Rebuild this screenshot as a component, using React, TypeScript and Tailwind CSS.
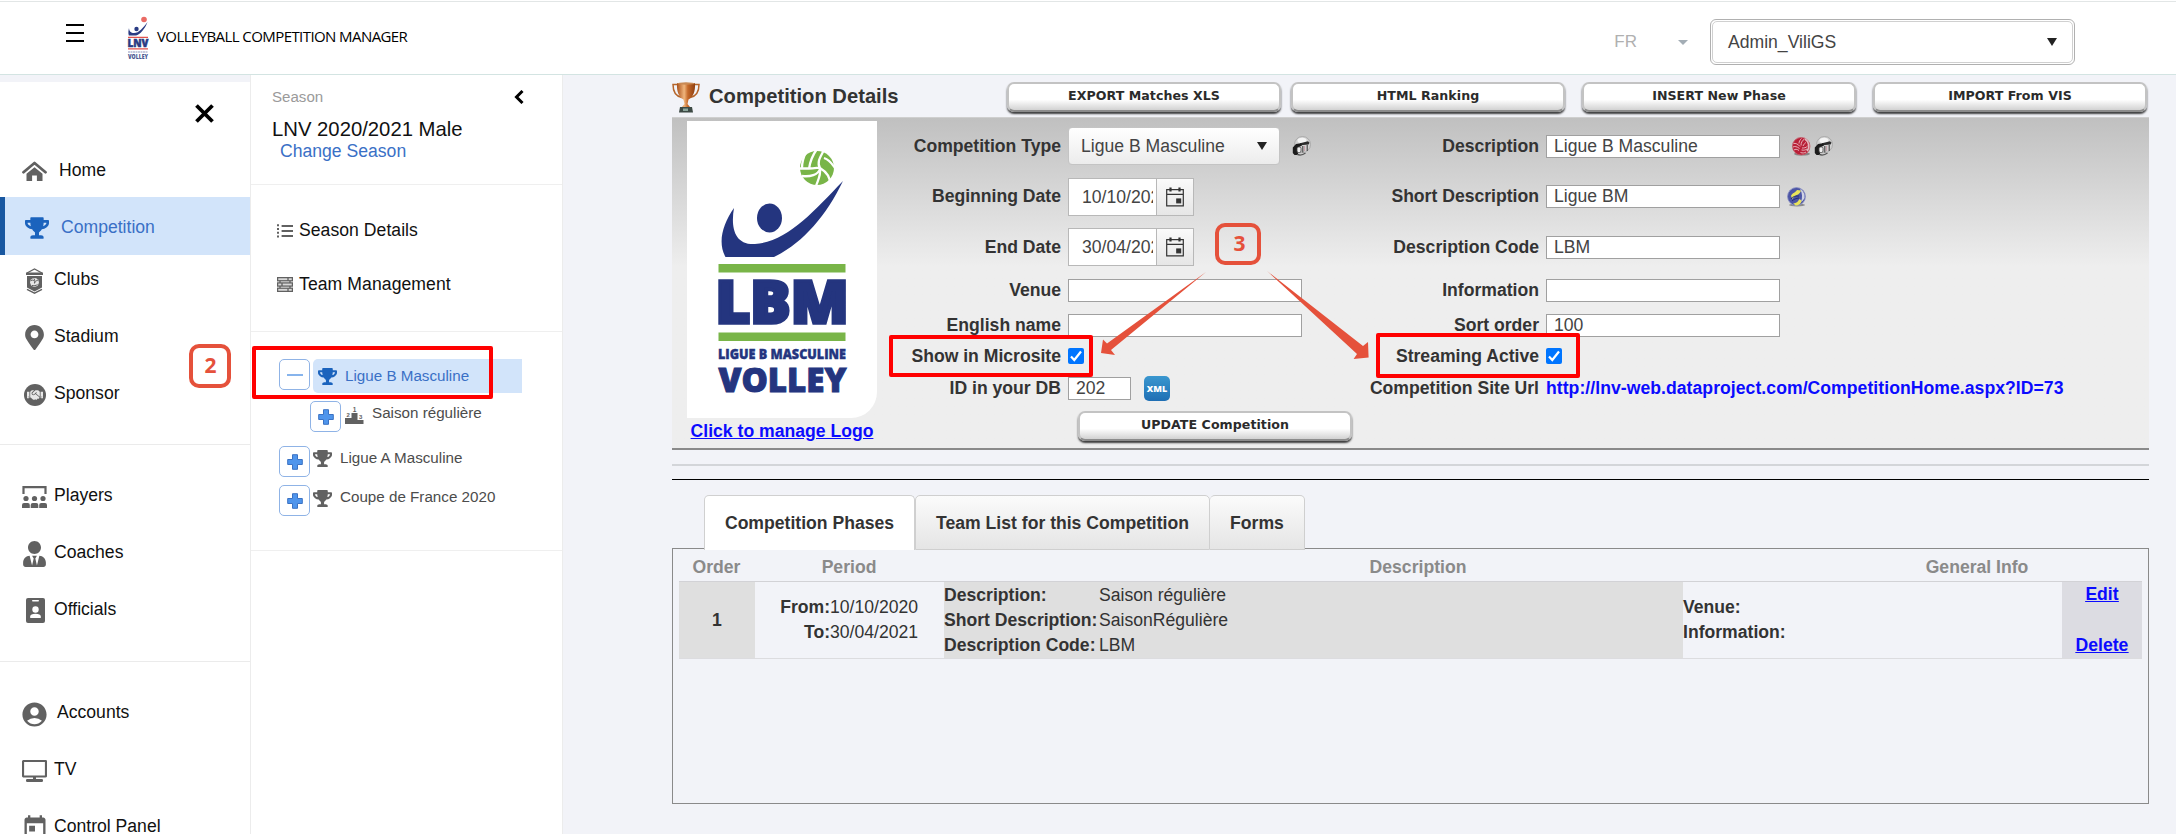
import React from 'react';
import { FaHandshake, FaMapMarkerAlt, FaTrophy, FaUserTie } from 'react-icons/fa';
import { MdAccountCircle, MdToday } from 'react-icons/md';

interface NavItemProps {
  label: string;
  icon: React.ReactNode;
  className?: string;
  gap?: string;
}

interface FormRowProps {
  height: string;
  leftLabel?: string;
  left?: React.ReactNode;
  rightLabel?: string;
  right?: React.ReactNode;
}

const HomeIcon = () => (
  <svg width="25" height="21" viewBox="0 0 25 21">
    <path d="M1.5 11.2 12.5 2l11 9.2" fill="none" stroke="#616161" strokeWidth="2.8" strokeLinejoin="round" strokeLinecap="round" />
    <path d="M4.5 12.8 12.5 6.200l8 6.600V20h-5.600v-5.400h-4.800V20H4.500z" fill="#616161" />
  </svg>
);

const ClubIcon = () => (
  <svg width="19" height="26" viewBox="0 0 19 26">
    <path d="M2 5 9.500 1 17 5" fill="none" stroke="#616161" strokeWidth="1.200" />
    <path d="M1 4.500h17v2.600H1zM2 8h15v11.500l-7.500 4L2 19.500z" fill="#616161" />
    <path d="M2 21.300 9.500 25.200 17 21.300" fill="none" stroke="#616161" strokeWidth="1.300" />
    <circle cx="9.500" cy="14.300" r="4.400" fill="#e6e6e6" />
    <path d="M6 12.500c2-1 4 0 3.500 2.500M13 12c-2 .5-3 2-3.500 3.500M7 17.500c1.500 0 4 .5 5.500-1M9 10.500l1 2.500" fill="none" stroke="#616161" strokeWidth="1" />
  </svg>
);

const SponsorIcon = () => (
  <span className="flex h-[22px] w-[22px] items-center justify-center rounded-full bg-[#616161]">
    <FaHandshake className="text-[16px] text-[#e8e8e8]" />
  </span>
);

const PlayersIcon = () => (
  <svg width="25" height="22" viewBox="0 0 25 22" fill="#616161">
    <path d="M1.500 8V1.200h22V8" fill="none" stroke="#616161" strokeWidth="2.200" />
    <circle cx="4" cy="12.500" r="2.600" />
    <circle cx="12.500" cy="12.500" r="2.600" />
    <circle cx="21" cy="12.500" r="2.600" />
    <path d="M0 22v-3a2 2 0 0 1 2-2h3.800a2 2 0 0 1 2 2v3zM8.700 22v-3a2 2 0 0 1 2-2h3.600a2 2 0 0 1 2 2v3zM17.200 22v-3a2 2 0 0 1 2-2H23a2 2 0 0 1 2 2v3z" />
  </svg>
);

const BadgeIcon = () => (
  <svg width="19" height="25" viewBox="0 0 19 25" className="ml-[2px]">
    <rect width="19" height="25" rx="2" fill="#616161" />
    <rect x="6" y="2" width="7" height="1.600" rx=".8" fill="#fff" />
    <circle cx="9.500" cy="11.500" r="3.200" fill="#fff" />
    <path d="M4.200 20v-1.500c0-1.900 2-2.800 5.300-2.800s5.300.9 5.300 2.800V20z" fill="#fff" />
  </svg>
);

const TvIcon = () => (
  <svg width="25" height="22" viewBox="0 0 25 22" fill="#616161">
    <rect x="1" y="1" width="23" height="15.500" rx=".8" fill="none" stroke="#616161" strokeWidth="2.200" />
    <path d="M11 17h3v2h-3z" />
    <rect x="4" y="19" width="17" height="3" rx="1.200" />
  </svg>
);

const ListIcon = () => (
  <svg width="16" height="14" viewBox="0 0 16 14" fill="#616161">
    <path d="M0 .3h2v2H0zM0 4h2v2H0zM0 7.700h2v2H0zM0 11.400h2v2H0zM4.600 1H16v2H4.600zM4.600 6H16v2H4.600zM4.600 11H16v2H4.600z" />
  </svg>
);

const TeamIcon = () => (
  <svg width="16" height="15" viewBox="0 0 16 15" fill="#d8d8d8" stroke="#616161" strokeWidth="1.300">
    <rect x=".6" y=".6" width="14.800" height="3.200" />
    <rect x=".6" y="5.900" width="14.800" height="3.200" />
    <rect x=".6" y="11.200" width="14.800" height="3.200" />
    <path d="M11 .6v3.200M5 5.900v3.200M11 11.200v3.200M3 3.800v2.100M13 3.800v2.100M3 9.100v2.100M13 9.100v2.100" />
  </svg>
);

const PodiumIcon = () => (
  <svg width="19" height="18" viewBox="0 0 19 18" fill="#616161">
    <path d="M0 12h6.500V7h6v7h6v4H0z" />
    <text x="7.700" y="5.500" fontSize="6.500" fontWeight="bold" fontFamily="Liberation Sans, sans-serif">1</text>
    <text x="1.500" y="10.500" fontSize="6" fontWeight="bold" fontFamily="Liberation Sans, sans-serif">2</text>
    <text x="14" y="12.500" fontSize="6" fontWeight="bold" fontFamily="Liberation Sans, sans-serif">3</text>
  </svg>
);

const CalendarIcon = () => (
  <svg width="18" height="20" viewBox="0 0 18 20" fill="none" stroke="#333" strokeWidth="1.200">
    <path d="M.7 2.600h16.600v16.300H.7zM.7 7.400h16.600" />
    <path d="M4.500.5v4M13.500.5v4" strokeWidth="2.200" />
    <rect x="10.800" y="12" width="3.800" height="3.800" fill="#333" />
  </svg>
);

const CameraIcon = () => (
  <svg width="19" height="20" viewBox="0 0 19 20">
    <circle cx="10.500" cy="8.500" r="8" fill="#d2d2d2" stroke="#a2a2a2" strokeWidth=".8" />
    <ellipse cx="10" cy="4.500" rx="4.500" ry="2.800" fill="#f4f4f4" />
    <path d="M8 7.200 16 5.200l1.500 1.500-1 1.800-8 .8z" fill="#2d2d2d" />
    <path d="M.8 11.500 4 8l5-.8 1 2.300-3 1.500-1 7 2 1H2.500l-1.700-2z" fill="#1c1c1c" />
    <rect x="5" y="11" width="4" height="5.500" rx="1.500" fill="#f0f0f0" stroke="#444" strokeWidth=".8" />
    <path d="M10.800 10v6.500M15.200 9v6" stroke="#444" strokeWidth="1.100" />
    <path d="M12.600 10v5" stroke="#c59aa4" strokeWidth="1" />
    <path d="M5 18.500c3 1 6 .5 8.500-1.500" fill="none" stroke="#555" strokeWidth="1.200" />
  </svg>
);

const RedBallIcon = () => (
  <svg width="20" height="19" viewBox="0 0 20 19">
    <ellipse cx="11" cy="17" rx="8" ry="1.600" fill="#555" opacity=".6" />
    <circle cx="10.200" cy="9.200" r="8.800" fill="#b92038" stroke="#c5606c" strokeWidth=".8" />
    <path d="M14 2c4 2.500 5 8.500 2 12" fill="none" stroke="#e2b9bf" strokeWidth="1.600" />
    <path
      d="M9 9.500C7 7 4.500 6 2.500 6.500M8.500 11.500C6 9.500 3.500 9 2 10M8 13.500c-2-1.500-4-1.500-5-.5M10 8.500c0-2.500 1-5 3.500-6.500M8 6.500c0-2 1-3.700 2.500-5M12 9c1-2 2-3 3-3.500M11 11c2 0 4 0 5.500-2M10.500 13c2.500.5 4 0 5.500-1M9.500 15.500c2 .8 4 .5 5.500-.5"
      fill="none"
      stroke="#f3d5d9"
      strokeWidth=".8"
    />
  </svg>
);

const BlueBallIcon = () => (
  <svg width="21" height="20" viewBox="0 0 21 20">
    <ellipse cx="11" cy="18" rx="8" ry="1.500" fill="#555" opacity=".6" />
    <circle cx="10.500" cy="9.500" r="9" fill="#4c55a5" stroke="#8d93c4" strokeWidth=".8" />
    <path d="M14 2c4 2 5 6 4.500 9-1 2-2 3-3.500 4 1.500-4 1.500-9-1-13z" fill="#cfd2e4" />
    <path d="M5 9c1-3 4-3 6-6l4 .5c-1 4-4 4-6 5.500-1.500 1-2 2-2.500 3z" fill="#e9e45a" />
    <path d="M7 16c3 1 5-1.500 6.500-4l2 1.500c0 3-3 5-6 5z" fill="#e9e45a" />
    <path d="M5 12c2-3 5-3 8-3M6 14c2-2 4-2.500 7-3" fill="none" stroke="#20286f" strokeWidth=".9" />
  </svg>
);

const BronzeTrophy = () => (
  <svg width="28" height="31" viewBox="0 0 28 31">
    <defs>
      <linearGradient id="bronze" x1="0" x2="1">
        <stop offset="0" stopColor="#a9511b" />
        <stop offset=".4" stopColor="#f0b57c" />
        <stop offset=".6" stopColor="#c56a2b" />
        <stop offset="1" stopColor="#8f3f10" />
      </linearGradient>
    </defs>
    <path d="M5 2.500H1c0 7 3 12 9 13M23 2.500h4c0 7-3 12-9 13" fill="none" stroke="#b5652b" strokeWidth="1.500" />
    <path d="M5 1h18c.5 9-2 14-6.500 16.500L15.500 22l2.500 3h-8l2.500-3-1-4.500C7 15 4.500 10 5 1z" fill="url(#bronze)" />
    <ellipse cx="14" cy="1.500" rx="9" ry="1.200" fill="#c98a55" />
    <path d="M8 25h12l1 5.500H7z" fill="#3d4a45" />
    <path d="M11 26.500h5v2.500h-5z" fill="#8ba59b" />
  </svg>
);

const LnvLogo = () => (
  <svg width="22" height="44" viewBox="-1 0 22 44">
    <circle cx="16" cy="3.500" r="2.800" fill="#ea6a64" />
    <circle cx="8.500" cy="13" r="2.200" fill="#2a3b83" />
    <path d="M1 12c0 3 2 5 5 5 5 0 9-5 13.500-11C17 13 12 18.500 8 19.500H.8C0 17 .5 14 1 12z" fill="#2a3b83" />
    <path d="M0 20.800h20v1.300H0zM0 32.300h20v1.300H0z" fill="#e2534e" />
    <text x="-.5" y="31" fontSize="10.500" fontWeight="800" stroke="#2a3b83" strokeWidth=".5" textLength="21" lengthAdjust="spacingAndGlyphs" fill="#2a3b83" fontFamily="Open Sans, sans-serif">LNV</text>
    <path d="M0 36h20" stroke="#8c95bb" strokeWidth="1" strokeDasharray="2 .5" />
    <text x="0" y="42.500" fontSize="6.500" fontWeight="800" textLength="20" lengthAdjust="spacingAndGlyphs" fill="#4a5791" fontFamily="Open Sans, sans-serif">VOLLEY</text>
  </svg>
);

const LbmLogo = () => (
  <svg width="190" height="297" viewBox="0 0 190 297">
    <circle cx="130" cy="47" r="17" fill="#79b548" />
    <path
      d="M122 48c1-8 3-13 8-20M133 47c-3-5-1-9 4-18M112 47.500h10c5 0 9-1 11-1M115 55c8 1 16-1 18-7M133 47c5 3 11 8 10 17M133 48c1 6-2 11-4 17M137 37c6 2 8 6 11 10M119 31c-2 4-4 8-4 16"
      fill="none"
      stroke="#fff"
      strokeWidth="2.300"
    />
    <ellipse cx="82.500" cy="97" rx="12.500" ry="14.500" fill="#24357f" />
    <path d="M47 87c-3 17-1 37 21 36 32-2 58-32 88-63-17 35-40 62-69 76H38.500c-8-14-3-33 8.500-49z" fill="#24357f" />
    <path d="M31.500 143h127v8.500h-127zM31.500 211.500h127v8.500h-127z" fill="#79b548" />
    <g fill="#24357f" stroke="#24357f" fontFamily="Open Sans, Lato, sans-serif" fontWeight="800">
      <text x="28.500" y="202" fontSize="57.500" strokeWidth="3.500" textLength="133" lengthAdjust="spacingAndGlyphs">LBM</text>
      <text x="31" y="237.500" fontSize="14" strokeWidth=".4" textLength="128" lengthAdjust="spacingAndGlyphs">LIGUE B MASCULINE</text>
      <text x="31.500" y="270.500" fontSize="33.500" strokeWidth="1" textLength="128" lengthAdjust="spacingAndGlyphs">VOLLEY</text>
    </g>
  </svg>
);

const NavItem: React.FC<NavItemProps> = ({ label, icon, className = '', gap = 'ml-[7px]' }) => (
  <div className={`flex items-center pl-[22px] text-[#111] ${className}`}>
    <span className="mt-[3px] flex w-[25px] justify-center text-[#616161]">{icon}</span>
    <span className={gap}>{label}</span>
  </div>
);

const TreeToggle = ({ open = false }: { open?: boolean }) => (
  <span className="flex h-[31px] w-[31px] shrink-0 items-center justify-center rounded-[5px] border border-[#8fb3e6] bg-white">
    <svg width="16" height="16" viewBox="0 0 16 16">
      {open ? (
        <path d="M0 8h16" stroke="#5f9be6" strokeWidth="1.500" />
      ) : (
        <path d="M5.500.7h5v4.800h4.800v5h-4.800v4.800h-5v-4.800H.7v-5h4.800z" fill="#4f95ec" stroke="#3a72c4" strokeWidth="1" />
      )}
    </svg>
  </span>
);

const ActionButton = ({ children, className = '' }: { children: React.ReactNode; className?: string }) => (
  <button
    className={`h-[30px] w-[274px] shrink-0 rounded-[7px] border-2 border-[#c3c3c3] border-b-[#8c8c8c] bg-linear-to-b from-white from-60% to-[#d2d2d2] pb-px font-['DejaVu_Sans'] text-[12.600px] leading-none font-bold tracking-[0.05px] text-[#2b2b2b] shadow-[0_2px_2px_rgba(0,0,0,0.75)] ${className}`}
  >
    {children}
  </button>
);

const TextInput = ({ value = '', className = 'w-[234px]' }: { value?: string; className?: string }) => (
  <span className={`flex h-[23px] items-center border border-[#a0a0a0] bg-white pl-[7px] text-[#444] ${className}`}>{value}</span>
);

const DateInput = ({ value }: { value: string }) => (
  <span className="flex h-[38px] w-[126px] border border-[#b8b8b8] bg-white">
    <span className="ml-[13px] w-[71px] overflow-hidden leading-[36px] whitespace-nowrap text-[#444]">{value}</span>
    <span className="ml-auto flex w-[37px] items-center justify-center border-l border-[#b8b8b8] bg-linear-to-b from-[#fafafa] to-[#e6e6e6]">
      <CalendarIcon />
    </span>
  </span>
);

const Checked = () => (
  <span className="flex h-4 w-4 items-center justify-center rounded-[2px] bg-[#0075ff]">
    <svg width="12" height="12" viewBox="0 0 12 12">
      <path d="M1 6.500 4.300 10 11 1.500" fill="none" stroke="#fff" strokeWidth="2.200" />
    </svg>
  </span>
);

const FormRow: React.FC<FormRowProps> = ({ height, leftLabel, left, rightLabel, right }) => (
  <div className={`flex items-center ${height}`}>
    <span className="mr-[7px] w-[184px] text-right font-bold">{leftLabel}</span>
    <div className="flex w-[235px] items-center">{left}</div>
    <span className="mr-[7px] w-[236px] text-right font-bold">{rightLabel}</span>
    <div className="flex items-center whitespace-nowrap">{right}</div>
  </div>
);

const Header = () => (
  <header className="flex h-[75px] items-start border-b border-[#d3e4e2] bg-white">
    <div className="mt-[24px] ml-[66px] flex w-[18px] flex-col gap-[6px]">
      <div className="h-[2px] bg-black" />
      <div className="h-[2px] bg-black" />
      <div className="h-[2px] bg-black" />
    </div>
    <div className="mt-[16px] ml-[43px]">
      <LnvLogo />
    </div>
    <span className="mt-[25px] ml-[8px] font-['Open_Sans'] text-[15px] leading-[22px] tracking-[-0.580px] whitespace-nowrap text-black">
      VOLLEYBALL COMPETITION MANAGER
    </span>
    <div className="mt-[19px] mr-[101px] ml-auto flex items-center">
      <span className="text-[17px] text-[#b0b0b0]">FR</span>
      <span className="mr-[22px] ml-[41px] border-x-[5px] border-t-[5px] border-x-transparent border-t-[#a3adb5]" />
      <div className="h-[46px] w-[365px] rounded-[6px] border border-[#b0b0b0] p-px">
        <div className="flex h-full items-center justify-between rounded-[5px] border border-[#d0d0d0] pr-[15px] pl-[15px] text-[17.600px] text-[#444]">
          <span>Admin_ViliGS</span>
          <span className="border-x-[5px] border-t-[8px] border-x-transparent border-t-[#222]" />
        </div>
      </div>
    </div>
  </header>
);

const Sidebar = () => (
  <aside className="h-[759px] w-[250px] shrink-0 overflow-hidden bg-white">
    <div className="h-[7px] bg-[#f2f3f8]" />
    <div className="flex h-[57px] items-start justify-end pt-[22px] pr-[36px]">
      <svg width="19" height="19" viewBox="0 0 19 19">
        <path d="M1.500 1.500l16 16M17.500 1.500l-16 16" stroke="#000" strokeWidth="3.800" />
      </svg>
    </div>
    <NavItem label="Home" icon={<HomeIcon />} gap="ml-[12px]" className="h-[58px] pt-[4px]" />
    <div className="flex h-[58px] items-center border-l-[5px] border-[#1857a0] bg-[#d2e4fa] pt-[2px] pl-[20px] text-[#3a70c6]">
      <FaTrophy className="mt-[2px] text-[24px] text-[#1b63bd]" />
      <span className="ml-[12px]">Competition</span>
    </div>
    <div className="h-[190px] border-b border-[#ebebeb]">
      <NavItem label="Clubs" icon={<ClubIcon />} className="h-[48px]" />
      <NavItem label="Stadium" icon={<FaMapMarkerAlt className="text-[25px]" />} className="h-[66px]" />
      <NavItem label="Sponsor" icon={<SponsorIcon />} className="h-[48px]" />
    </div>
    <div className="h-[217px] border-b border-[#ebebeb] pt-[22px]">
      <NavItem label="Players" icon={<PlayersIcon />} className="h-[56px]" />
      <NavItem label="Coaches" icon={<FaUserTie className="text-[26px]" />} className="h-[58px]" />
      <NavItem label="Officials" icon={<BadgeIcon />} className="h-[56px]" />
    </div>
    <div className="pt-[22px]">
      <NavItem label="Accounts" icon={<MdAccountCircle className="-mx-1 text-[29px]" />} gap="ml-[10px]" className="h-[57px]" />
      <NavItem label="TV" icon={<TvIcon />} className="h-[56px]" />
      <NavItem label="Control Panel" icon={<MdToday className="-mx-1 text-[28px]" />} className="h-[58px]" />
    </div>
  </aside>
);

const SeasonPanel = () => (
  <aside className="h-[759px] w-[313px] shrink-0 border-x border-[#ececec] bg-white">
    <div className="h-[110px] border-b border-[#efefef] pt-[12px] pl-[21px]">
      <div className="flex items-center justify-between pr-[38px] text-[15.100px] leading-[20px] text-[#9a9a9a]">
        <span>Season</span>
        <svg width="10" height="14" viewBox="0 0 10 14">
          <path d="M8.500 1 2.500 7l6 6" fill="none" stroke="#000" strokeWidth="3" />
        </svg>
      </div>
      <div className="mt-[10px] text-[20.300px] leading-[24px] text-[#111]">LNV 2020/2021 Male</div>
      <div className="pl-[8px] leading-[20px] text-[#3a70c6]">Change Season</div>
    </div>
    <div className="h-[147px] border-b border-[#efefef] pt-[32px] pl-[26px] text-[#111]">
      <div className="flex h-[27px] items-center gap-[6px] tracking-[0.040px]">
        <ListIcon />
        Season Details
      </div>
      <div className="mt-[27px] flex h-[27px] items-center gap-[6px] tracking-[0.080px]">
        <TeamIcon />
        Team Management
      </div>
    </div>
    <div className="h-[219px] border-b border-[#efefef] pt-[27px] pl-[28px] text-[15.200px] text-[#4c4c4c]">
      <div className="flex">
        <TreeToggle open />
        <div className="ml-[3px] flex h-[34px] w-[209px] items-center rounded-l-[5px] bg-[#d2e4fa] pl-[5px] text-[#3a70c6]">
          <FaTrophy className="text-[19px] text-[#1b63bd]" />
          <span className="ml-[8px]">Ligue B Masculine</span>
        </div>
      </div>
      <div className="mt-[8px] flex items-start pl-[31px]">
        <TreeToggle />
        <span className="mt-[5px] ml-[4px]"><PodiumIcon /></span>
        <span className="ml-[8px] leading-[23px]">Saison régulière</span>
      </div>
      <div className="mt-[14px] flex items-start">
        <TreeToggle />
        <FaTrophy className="mt-[3px] ml-[3px] text-[19px] text-[#616161]" />
        <span className="ml-[8px] leading-[24px]">Ligue A Masculine</span>
      </div>
      <div className="mt-[8px] flex items-start">
        <TreeToggle />
        <FaTrophy className="mt-[4px] ml-[3px] text-[19px] text-[#616161]" />
        <span className="ml-[8px] leading-[24px]">Coupe de France 2020</span>
      </div>
    </div>
  </aside>
);

const CompetitionForm = () => (
  <section className="flex h-[333px] border-t border-b-2 border-t-[#cfcfcf] border-b-[#8a8a8a] bg-linear-to-b from-[#c0c0c0] to-[#eeeeee] to-45%">
    <div className="ml-[15px] w-[190px] shrink-0 pt-[3px]">
      <div className="h-[297px] rounded-br-[26px] bg-white">
        <LbmLogo />
      </div>
      <a className="block text-center font-bold whitespace-nowrap text-[#0b0bff] underline">Click to manage Logo</a>
    </div>
    <div className="pt-[3px]">
      <FormRow
        height="h-[50px]"
        leftLabel="Competition Type"
        left={
          <>
            <span className="flex h-[38px] w-[212px] shrink-0 items-center justify-between rounded-[4px] border border-[#c4c4c4] bg-linear-to-b from-white to-[#ececec] pr-[12px] pl-[12px] text-[#444]">
              Ligue B Masculine
              <span className="border-x-[5px] border-t-[8px] border-x-transparent border-t-[#222]" />
            </span>
            <span className="ml-[12px] shrink-0"><CameraIcon /></span>
          </>
        }
        rightLabel="Description"
        right={
          <>
            <TextInput value="Ligue B Masculine" />
            <span className="ml-[11px] flex items-center gap-[3px]">
              <RedBallIcon />
              <CameraIcon />
            </span>
          </>
        }
      />
      <FormRow
        height="h-[51px]"
        leftLabel="Beginning Date"
        left={<DateInput value="10/10/2020" />}
        rightLabel="Short Description"
        right={
          <>
            <TextInput value="Ligue BM" />
            <span className="ml-[6px]"><BlueBallIcon /></span>
          </>
        }
      />
      <FormRow height="h-[50px]" leftLabel="End Date" left={<DateInput value="30/04/2021" />} rightLabel="Description Code" right={<TextInput value="LBM" />} />
      <FormRow height="h-[36px]" leftLabel="Venue" left={<TextInput />} rightLabel="Information" right={<TextInput />} />
      <FormRow height="h-[35px]" leftLabel="English name" left={<TextInput />} rightLabel="Sort order" right={<TextInput value="100" />} />
      <FormRow height="h-[26px]" leftLabel="Show in Microsite" left={<Checked />} rightLabel="Streaming Active" right={<Checked />} />
      <FormRow
        height="h-[39px]"
        leftLabel="ID in your DB"
        left={
          <>
            <TextInput value="202" className="w-[63px]" />
            <span className="ml-[13px] flex h-[25px] w-[26px] items-center justify-center rounded-[5px] bg-linear-to-b from-[#3a97cf] to-[#1f6fb4] font-['Open_Sans'] text-[9px] font-extrabold text-white">
              XML
            </span>
          </>
        }
        rightLabel="Competition Site Url"
        right={<a className="font-bold tracking-[0.050px] text-[#0b0bff]">http://lnv-web.dataproject.com/CompetitionHome.aspx?ID=73</a>}
      />
      <ActionButton className="mt-[3px] ml-[201px]">UPDATE Competition</ActionButton>
    </div>
  </section>
);

const PhaseTabs = () => (
  <section>
    <div className="relative z-10 -mb-[2px] flex h-[55px] pl-[32px] font-bold">
      <div className="flex w-[211px] items-center justify-center rounded-t-[5px] border border-b-0 border-[#d0d0d0] bg-white">Competition Phases</div>
      <div className="flex w-[295px] items-center justify-center rounded-t-[5px] border border-[#cfcfcf] bg-linear-to-b from-[#fbfbfb] to-[#e5e5e5] pt-px">
        Team List for this Competition
      </div>
      <div className="flex w-[95px] items-center justify-center rounded-t-[5px] border border-l-0 border-[#cfcfcf] bg-linear-to-b from-[#fbfbfb] to-[#e5e5e5] pt-px">Forms</div>
    </div>
    <div className="h-[256px] border border-[#8a8a8a] px-[6px] pt-[1px]">
      <div className="grid h-[32px] grid-cols-[75px_190px_948px_170px_80px] items-center border-b border-[#d2d2d6] pt-[4px] text-center font-bold text-[#8a8a8a]">
        <span>Order</span>
        <span>Period</span>
        <span>Description</span>
        <span>General Info</span>
      </div>
      <div className="grid h-[77px] grid-cols-[76px_189px_739px_379px_80px] border-b border-[#dcdcdf]">
        <div className="flex items-center justify-center bg-[#dfdfdf] font-bold">1</div>
        <div className="flex flex-col justify-center pl-[15px] leading-[25px]">
          <div className="flex"><b className="w-[60px] text-right">From:</b><span>10/10/2020</span></div>
          <div className="flex"><b className="w-[60px] text-right">To:</b><span>30/04/2021</span></div>
        </div>
        <div className="grid grid-cols-[155px_1fr] content-center bg-[#dfdfdf] leading-[25px] whitespace-nowrap">
          <b>Description:</b>
          <span>Saison régulière</span>
          <b>Short Description:</b>
          <span>SaisonRégulière</span>
          <b>Description Code:</b>
          <span>LBM</span>
        </div>
        <div className="flex flex-col justify-center leading-[25px] font-bold">
          <span>Venue:</span>
          <span>Information:</span>
        </div>
        <div className="flex flex-col items-center justify-between bg-[#dcdce2] leading-[25px] font-bold text-[#0b0bff] underline">
          <a>Edit</a>
          <a>Delete</a>
        </div>
      </div>
    </div>
  </section>
);

// Numbered steps, frames and arrows drawn over the page
const Annotations = () => (
  <>
    <div className="absolute top-[346px] left-[252px] h-[53px] w-[241px] rounded-[2px] border-4 border-[#ff0000]" />
    <div className="absolute top-[335px] left-[889px] h-[42px] w-[204px] rounded-[2px] border-4 border-[#ff0000]" />
    <div className="absolute top-[333px] left-[1376px] h-[45px] w-[204px] rounded-[2px] border-4 border-[#ff0000]" />
    <div className="absolute top-[344px] left-[189px] flex h-[44px] w-[42px] items-center justify-center rounded-[10px] border-4 border-[#e5513b] pl-px font-['Open_Sans'] text-[21px] font-bold text-[#e5513b]">
      2
    </div>
    <div className="absolute top-[223px] left-[1215px] flex h-[42px] w-[46px] items-center justify-center rounded-[10px] border-4 border-[#e5513b] pl-[3px] font-['Open_Sans'] text-[21px] font-bold text-[#e5513b]">
      3
    </div>
    <svg className="absolute top-[265px] left-[1095px]" width="280" height="100" viewBox="1095 265 280 100" fill="#e5513b">
      <path d="M1206 272 1111 350l4 5-14-2 2-13.500 4 4z" />
      <path d="M1267 271l96 75 5-4 .6 15.500-15 1.500 3.400-5z" />
    </svg>
  </>
);

export default function App() {
  return (
    <div className="relative h-[834px] w-[2176px] overflow-hidden bg-[#f2f3f8] font-['Liberation_Sans',sans-serif] text-[17.600px] leading-normal text-[#333]">
      <Header />
      <div className="flex">
        <Sidebar />
        <SeasonPanel />
        <main className="ml-[109px] w-[1477px]">
          <div className="flex h-[42px] items-start pt-[7px]">
            <BronzeTrophy />
            <h1 className="w-[307px] pl-[9px] text-[20.200px] leading-[28px] font-bold">Competition Details</h1>
            <ActionButton>EXPORT Matches XLS</ActionButton>
            <ActionButton className="ml-[10px]">HTML Ranking</ActionButton>
            <ActionButton className="ml-[17px]">INSERT New Phase</ActionButton>
            <ActionButton className="ml-[17px]">IMPORT From VIS</ActionButton>
          </div>
          <CompetitionForm />
          <div className="mt-[14px] h-[2px] bg-[#d3d5d9]" />
          <div className="mt-[13px] mb-[15px] h-px bg-black" />
          <PhaseTabs />
        </main>
      </div>
      <Annotations />
      <div className="absolute top-[1px] left-0 h-px w-full bg-[#e2e6e6]" />
    </div>
  );
}
